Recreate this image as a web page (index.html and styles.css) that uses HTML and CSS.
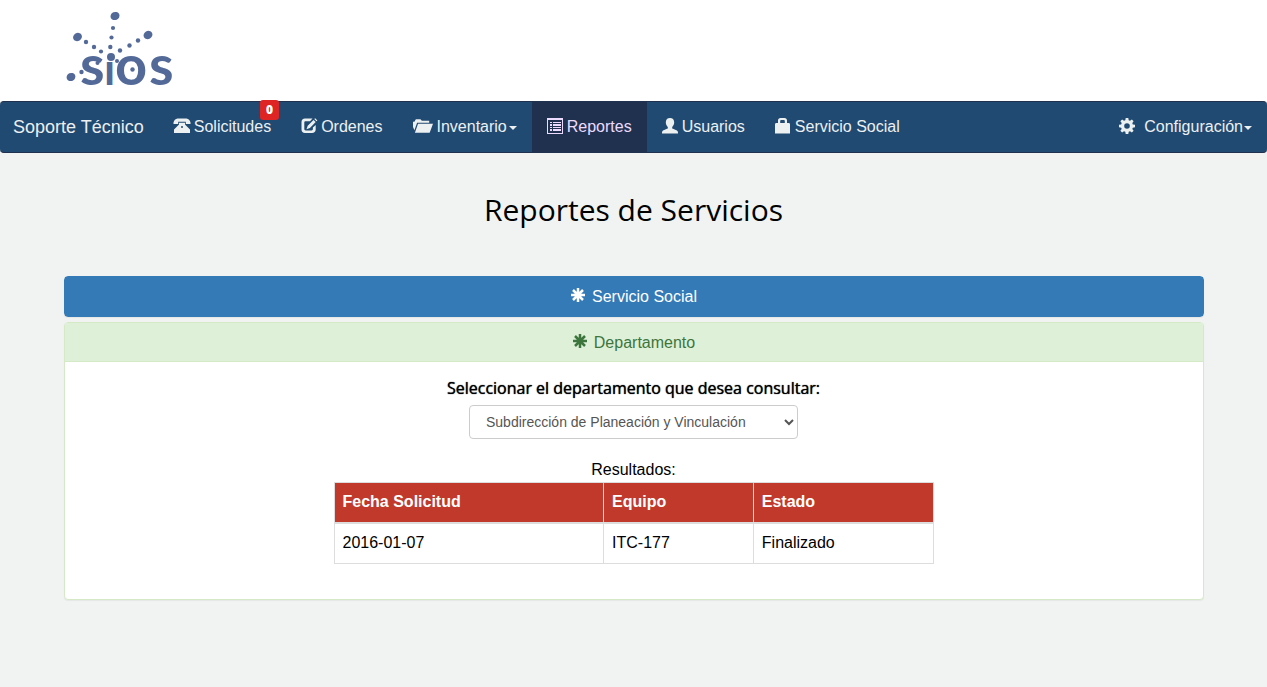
FILE: index.html
```html
<!DOCTYPE html>
<html lang="es">
<head>
<meta charset="utf-8">
<meta name="viewport" content="width=device-width, initial-scale=1">
<title>Reportes de Servicios</title>
<link rel="stylesheet" href="styles.css">
</head>
<body>
<header class="banner">
  <svg class="logo" viewBox="0 0 108 75" role="img" aria-label="sios">
    <g class="logo-dots">
      <ellipse cx="49" cy="4" rx="4.6" ry="4" transform="rotate(-25 49 4)"/>
      <circle cx="47" cy="16" r="2.1"/><circle cx="45.500" cy="25.500" r="2.1"/><circle cx="44.300" cy="35" r="2.200"/>
      <ellipse cx="11.500" cy="25" rx="4.600" ry="4" transform="rotate(-30 11.500 25)"/>
      <circle cx="20" cy="30" r="2.200"/><circle cx="28" cy="35" r="2.200"/><circle cx="35" cy="39.500" r="2.100"/>
      <ellipse cx="82" cy="23" rx="4.600" ry="4" transform="rotate(-30 82 23)"/>
      <circle cx="72" cy="28.500" r="2.200"/><circle cx="63.500" cy="33.500" r="2.200"/><circle cx="54" cy="38.500" r="2.200"/>
      <ellipse cx="5" cy="65" rx="4.500" ry="4" transform="rotate(-25 5 65)"/>
      <circle cx="15.500" cy="60" r="2.200"/><circle cx="31.500" cy="51" r="2"/><circle cx="51" cy="49" r="2"/><circle cx="66.500" cy="57.500" r="2.200"/>
      <circle cx="45" cy="45" r="4"/>
    </g>
    <text class="logo-word" y="73"><tspan x="14">s</tspan><tspan class="logo-stem" x="38">ı</tspan><tspan x="49">o</tspan><tspan x="83">s</tspan></text>
  </svg>
</header>

<nav class="navbar">
  <a class="brand" href="#">Soporte Técnico</a>
  <ul class="menu">
    <li><a class="item" href="#">
      <svg class="icon" viewBox="0 0 16 16"><path d="M3.500.5h9c2 .4 3.500 1.700 4 4V6h-4.700V3.800H4.200V6H-.5V4.500c.5-2.300 2-3.600 4-4zM5 4.800h6v1.700L16 11.500V15H0v-3.500l5-5z"/><circle class="hole" cx="8" cy="9" r="1"/></svg>
      <span>Solicitudes</span></a><span class="badge">0</span></li>
    <li><a class="item" href="#">
      <svg class="icon" viewBox="0 0 16 16"><path d="M4 .5h7.500L9 3.300H4.700C3.800 3.300 3.300 3.800 3.300 4.700v6.400c0 .9.500 1.400 1.400 1.400h5.800c.9 0 1.400-.5 1.400-1.400V9.500L14.700 7v4.500c0 2.200-1.500 3.500-3.700 3.500H4C1.800 15 .5 13.700.5 11.500V4C.5 1.800 1.800.5 4 .5zM12.500 1.900l2.200 2.200-5.800 5.800-3.400 1.300 1.200-3.500zM13.300 1.100l.9-.9 2.200 2.200-.9.900z"/></svg>
      <span>Ordenes</span></a></li>
    <li><a class="item" href="#">
      <svg class="icon icon-wide" viewBox="0 0 21 16"><path d="M0 3.500h1.500L3 1h4.800L9.300 2.500h7.700v2H4.300L1.500 12.500 0 9zM5.300 5.700H21L17.500 15H2z"/></svg>
      <span>Inventario</span><i class="caret"></i></a></li>
    <li><a class="item active" href="#">
      <svg class="icon" viewBox="0 0 16 16"><path fill-rule="evenodd" d="M0 0h16v16H0zM1 2v13h14V2zM3 4h2v1H3zM6 4h8v1H6zM3 6h2v2H3zM6 6h8v2H6zM3 9h2v1H3zM6 9h8v1H6zM3 11h2v2H3zM6 11h8v2H6z"/></svg>
      <span>Reportes</span></a></li>
    <li><a class="item" href="#">
      <svg class="icon" viewBox="0 0 16 16"><path d="M8 0c2.500 0 4.200 1.500 4.200 4.300 0 1.900-.9 3.700-2 4.700v1.500c1.800.8 4.300 1.500 5.300 2.500.4.400.5 1.200.5 2.500H0c0-1.300.1-2.100.5-2.500 1-1 3.500-1.700 5.300-2.500V9c-1.100-1-2-2.800-2-4.700C3.800 1.500 5.500 0 8 0z"/></svg>
      <span>Usuarios</span></a></li>
    <li><a class="item" href="#">
      <svg class="icon" viewBox="0 0 16 16"><path fill-rule="evenodd" d="M3 5V2.500C3 1 4 0 5.500 0h4C11 0 12 1 12 2.500V5h1.500C14.500 5 15 5.500 15 6.500v9H0v-9C0 5.500.5 5 1.500 5zM5.200 5h4.600V3c0-.5-.3-.9-.9-.9H6.100c-.6 0-.9.400-.9.900z"/></svg>
      <span>Servicio Social</span></a></li>
  </ul>
  <a class="item settings" href="#">
    <svg class="icon" viewBox="0 0 16 16"><path fill-rule="evenodd" d="M6.700 0h2.600l.4 2.200 1.300.6L12.900 1.500l1.700 1.700-1.300 1.900.5 1.300 2.200.4v2.500l-2.200.4-.5 1.300 1.300 1.800-1.700 1.800-1.900-1.300-1.300.5L9.300 16H6.700l-.4-2.200-1.300-.5-1.900 1.300-1.700-1.800L2.700 11l-.5-1.300L0 9.300V6.800l2.200-.4.500-1.300-1.300-1.900 1.700-1.700L5 2.800l1.300-.6zM8 5.200a2.800 2.800 0 1 0 0 5.600 2.800 2.800 0 0 0 0-5.600z"/></svg>
    <span>Configuración</span><i class="caret"></i></a>
</nav>

<main class="container">
  <h1 class="title">Reportes de Servicios</h1>
  <section class="panel panel-primary">
    <h2 class="panel-heading"><a href="#">
      <svg class="star" viewBox="0 0 16 16"><path d="M8 0v14M1 7h14M3 2l10 10M13 2L3 12"/></svg>
      <span>Servicio Social</span></a></h2>
  </section>
  <section class="panel panel-success">
    <h2 class="panel-heading"><a href="#">
      <svg class="star" viewBox="0 0 16 16"><path d="M8 0v14M1 7h14M3 2l10 10M13 2L3 12"/></svg>
      <span>Departamento</span></a></h2>
    <div class="panel-body">
      <label class="prompt" for="departamento">Seleccionar el departamento que desea consultar:</label>
      <select class="select" id="departamento">
        <option>Subdirección de Planeación y Vinculación</option>
      </select>
      <table class="results">
        <caption>Resultados:</caption>
        <colgroup><col class="col-date"><col class="col-device"><col class="col-status"></colgroup>
        <thead><tr><th scope="col">Fecha Solicitud</th><th scope="col">Equipo</th><th scope="col">Estado</th></tr></thead>
        <tbody><tr><td>2016-01-07</td><td>ITC-177</td><td>Finalizado</td></tr></tbody>
      </table>
    </div>
  </section>
</main>
</body>
</html>
```
FILE: styles.css
```css
* { box-sizing: border-box; }
body {
  margin: 0;
  background: #f0f3f2;
  color: #000;
  font: 16px/20px "Liberation Sans", Arial, sans-serif;
}
a { color: inherit; text-decoration: none; }

.banner { background: #fff; padding: 12px 66px 14px; }
.logo { display: block; width: 108px; height: 75px; overflow: visible; }
.logo-dots { fill: #536a98; }
.logo-word { font: 700 56px Lato, sans-serif; fill: #536a98; }
.logo-stem { font-size: 44px; }

.navbar {
  display: flex;
  align-items: center;
  background: #204a71;
  border: 1px solid #20314f;
  border-width: 1px 0;
  border-radius: 4px;
  color: #ecf0f1;
}
.brand { padding: 15px 15px 15px 13px; font-size: 18px; }
.menu { display: flex; margin: 0; padding: 0; list-style: none; }
.menu li { position: relative; }
.item { display: flex; align-items: center; gap: 4px; padding: 15px; }
.item.active { background: #20314f; color: #ecdbff; }
.icon { width: 16px; height: 16px; margin-bottom: 2px; fill: currentColor; overflow: visible; }
.icon-wide { width: 20px; }
.hole { fill: #204a71; }
.caret {
  border: 4px solid transparent;
  border-top-color: currentColor;
  border-bottom: 0;
  margin: 2px 0 0 -2px;
}
.settings .caret { margin-left: -3px; }
.badge {
  position: absolute;
  top: -2px;
  right: 7px;
  padding: 3px 6px;
  border-radius: 3px;
  background: #df2424;
  color: #fff;
  font: 800 12px/14px "Open Sans", sans-serif;
}
.settings { margin-left: auto; }
.settings .icon { margin-right: 5px; }

.container { max-width: 1140px; margin: 0 auto; padding-top: 36px; }
.title {
  margin: 0 0 45px;
  font: 400 30px/42px "Open Sans", sans-serif;
  text-align: center;
}
.panel {
  margin-bottom: 5px;
  border: 1px solid;
  border-radius: 4px;
  background: #fff;
  box-shadow: 0 1px 1px rgba(0, 0, 0, .05);
}
.panel-heading {
  margin: 0;
  padding: 10px 15px;
  font-size: 16px;
  font-weight: 400;
  line-height: 19px;
}
.panel-heading a { display: flex; justify-content: center; align-items: center; gap: 6px; }
.panel-primary { border-color: #337ab7; }
.panel-primary .panel-heading { background: #337ab7; color: #fff; }
.panel-success { border-color: #d6e9c6; }
.panel-success .panel-heading {
  padding-bottom: 9px;
  border-bottom: 1px solid #d6e9c6;
  background: #dff0d8;
  color: #3c763d;
}
.star { width: 16px; height: 16px; margin-bottom: 1px; stroke: currentColor; stroke-width: 2.5; }
.panel-body { display: flex; flex-direction: column; align-items: center; padding: 15px 15px 35px; }
.prompt {
  margin-bottom: 5px;
  font: 400 16px/23px "Open Sans", sans-serif;
  text-shadow: 0 0 1px #000;
}
.select {
  width: 329px;
  max-width: 100%;
  height: 34px;
  padding: 6px 12px;
  border: 1px solid #ccc;
  border-radius: 4px;
  background: #fff;
  color: #555;
  font: 14px/20px "Liberation Sans", Arial, sans-serif;
}
.results { width: 600px; max-width: 100%; margin-top: 20px; border-collapse: collapse; }
.results caption { padding-bottom: 2px; line-height: 21px; }
.results th, .results td { padding: 8px 8px 9px; border: 1px solid #ddd; text-align: left; line-height: 22px; }
.results th { border-bottom-width: 2px; background: #c0392b; color: #fff; }
.col-date { width: 45%; }
.col-device { width: 25%; }
.col-status { width: 30%; }
```
